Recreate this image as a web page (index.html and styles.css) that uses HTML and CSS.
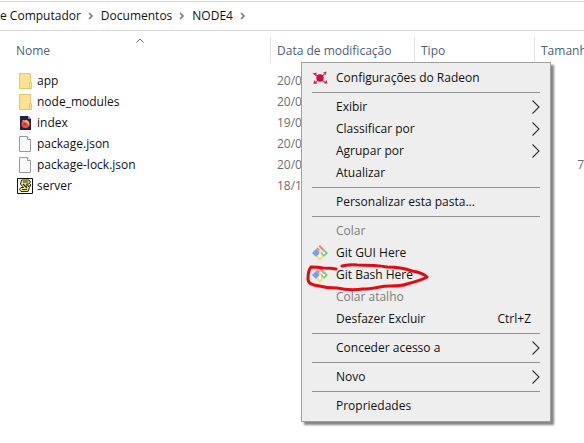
FILE: index.html
```html
<!DOCTYPE html>
<html lang="pt-BR">
<head>
<meta charset="utf-8">
<title>NODE4</title>
<link rel="stylesheet" href="styles.css">
</head>
<body>
<svg class="defs" aria-hidden="true">
  <symbol id="chevron" viewBox="0 0 8 14"><path d="M.5 .5L7 7L.5 13.500" fill="none" stroke="#333" stroke-width="1.100"/></symbol>
  <symbol id="crumb" viewBox="0 0 6 8"><path d="M1 1L4 4L1 7" fill="none" stroke="#777" stroke-width="1.600"/></symbol>
  <symbol id="folder" viewBox="0 0 16 16"><path d="M2 0H14V9L15 10V15.500H2Z" fill="#fce28f"/><path d="M2.500 .5H13.500V9M2.500 .5V15.500H14.500V9.500H12.500V15" fill="none" stroke="#e8c66c"/></symbol>
  <symbol id="file" viewBox="0 0 16 16"><path d="M2.500 .5H10.500L13.500 3.500V15.500H2.500Z" fill="#f8f8f8" stroke="#999"/><path d="M10.500 .5V3.500H13.500" fill="#fff" stroke="#999"/></symbol>
  <symbol id="firefox" viewBox="0 0 16 16"><path d="M3 1H11L14 4V15H3Z" fill="#25214f"/><path d="M11 1V4H14Z" fill="#8c85c4"/><circle cx="8.500" cy="9" r="4" fill="#f0522f"/><path d="M5 6C7 4 8 7 9 5C12 6 13 9 12 11C11 8 9 7 5 6Z" fill="#ffc33b"/><circle cx="8" cy="9.300" r="1.700" fill="#a83a9c"/></symbol>
  <symbol id="script" viewBox="0 0 16 16"><path d="M.5 .5H15.500V15.500H.5Z" fill="#fff" stroke="#111"/><path d="M4.500 2H12L13.500 4L12 6H9.500L12.500 9.500L11 13.500H4L2.500 11.500L4 9.500H6.500L3.500 6Z" fill="#f0ea68" stroke="#222"/><path d="M6 4H11M6 6L10 10M5 11.500H10M8 8H10M13.500 6V8H11" fill="none" stroke="#222" stroke-width="1.100"/></symbol>
  <symbol id="radeon" viewBox="0 0 16 14"><path d="M3 3L13 11.500M12.500 3L4 11" stroke="#d83d5b" stroke-width="1.100"/><path d="M.5 2.500L4.500 1.500L4 5ZM11 1.500L14.500 .5L14 4ZM2 9L5.500 12.500L1.500 13ZM12 12.500L14.500 9L15.500 12.500Z" fill="#cf2447"/><circle cx="8" cy="7" r="3.700" fill="#d9083a"/></symbol>
  <symbol id="git" viewBox="0 0 16 16"><path d="M8 0L12 4L8 8L4 4Z" fill="#ee8580"/><path d="M4 4L8 8L4 12L0 8Z" fill="#6ea3ef"/><path d="M12 4L16 8L12 12L8 8Z" fill="#86cb70"/><path d="M8 8L12 12L8 16L4 12Z" fill="#f4df82"/><path d="M6 2L10 6M8 5V11M9 6L12 8" stroke="#f5f5f5" stroke-width="1.300"/><circle cx="8" cy="11.500" r="1.200" fill="#fff"/><circle cx="12" cy="8" r="1.200" fill="#fff"/></symbol>
</svg>

<nav class="address" aria-label="Caminho">
  <a href="#">e Computador</a><svg class="crumb"><use href="#crumb"/></svg>
  <a href="#">Documentos</a><svg class="crumb"><use href="#crumb"/></svg>
  <a href="#">NODE4</a><svg class="crumb"><use href="#crumb"/></svg>
</nav>

<main>
  <table class="files">
    <colgroup><col class="col-name"><col class="col-date"><col class="col-type"><col></colgroup>
    <thead>
      <tr>
        <th><svg class="sort" viewBox="0 0 8 5"><path d="M.5 4.500L4 1L7.500 4.500" fill="none" stroke="#666"/></svg><span>Nome</span></th>
        <th><span>Data de modificação</span></th>
        <th><span>Tipo</span></th>
        <th><span>Tamanho</span></th>
      </tr>
    </thead>
    <tbody>
      <tr><td><a href="#"><svg><use href="#folder"/></svg>app</a></td><td>20/04</td><td></td><td></td></tr>
      <tr><td><a href="#"><svg><use href="#folder"/></svg>node_modules</a></td><td>20/04</td><td></td><td></td></tr>
      <tr><td><a href="#"><svg><use href="#firefox"/></svg>index</a></td><td>19/04</td><td></td><td></td></tr>
      <tr><td><a href="#"><svg><use href="#file"/></svg>package.json</a></td><td>20/0</td><td></td><td></td></tr>
      <tr><td><a href="#"><svg><use href="#file"/></svg>package-lock.json</a></td><td>20/0</td><td></td><td class="size">7</td></tr>
      <tr><td><a href="#"><svg><use href="#script"/></svg>server</a></td><td>18/1</td><td></td><td></td></tr>
    </tbody>
  </table>
</main>

<div class="menu">
  <button><svg class="icon"><use href="#radeon"/></svg><span>Configurações do Radeon</span></button>
  <hr>
  <button><span>Exibir</span><svg class="chevron"><use href="#chevron"/></svg></button>
  <button><span>Classificar por</span><svg class="chevron"><use href="#chevron"/></svg></button>
  <button><span>Agrupar por</span><svg class="chevron"><use href="#chevron"/></svg></button>
  <button><span>Atualizar</span></button>
  <hr>
  <button><span>Personalizar esta pasta...</span></button>
  <hr>
  <button disabled><span>Colar</span></button>
  <button><svg class="icon"><use href="#git"/></svg><span>Git GUI Here</span></button>
  <button><svg class="icon"><use href="#git"/></svg><span>Git Bash Here</span></button>
  <button disabled><span>Colar atalho</span></button>
  <button><span>Desfazer Excluir</span><kbd>Ctrl+Z</kbd></button>
  <hr>
  <button><span>Conceder acesso a</span><svg class="chevron"><use href="#chevron"/></svg></button>
  <hr>
  <button><span>Novo</span><svg class="chevron"><use href="#chevron"/></svg></button>
  <hr>
  <button><span>Propriedades</span></button>
  <svg class="marker" viewBox="0 0 126 32" aria-hidden="true"><path d="M30 6C25 5 21 5 17 5C12 4 8 4 5 4C2 7 2 11 2 16C2 19 4 21 8 22C16 24 24 25 31 25C40 27 49 27 57 26C67 26 75 23 84 23C91 23 96 23 101 21C109 19 116 17 121 14C118 11 112 9 106 8C98 5 91 4 81 4C70 2 61 2 51 2C46 1 41 2 36 3"/></svg>
</div>
</body>
</html>
```

FILE: styles.css
```css
* { box-sizing: border-box; }

body {
  margin: 0;
  min-height: 100vh;
  overflow: hidden;
  background: #fff;
  color: #111;
  font: 12px/16px "Open Sans", "Noto Sans", sans-serif;
}

a { color: inherit; text-decoration: none; }
.defs { display: none; }

.address {
  display: flex;
  align-items: center;
  height: 30px;
  margin-top: 1px;
  border: solid #d9d9d9;
  border-width: 1px 0;
}

.crumb { width: 6px; height: 8px; margin: 0 7px; }

.files {
  width: 100%;
  table-layout: fixed;
  border-collapse: collapse;
}

.col-name { width: 271px; }
.col-date { width: 144px; }
.col-type { width: 120px; }

th {
  position: relative;
  height: 39px;
  padding: 7px 0;
  color: #4c607a;
  font-weight: 400;
  text-align: left;
  white-space: nowrap;
}

th span {
  display: block;
  height: 25px;
  padding-left: 6px;
  border-right: 1px solid #e2e2e2;
  line-height: 26px;
}

th:first-child span { padding-left: 16px; }
th:last-child span { border: 0; overflow: hidden; }

.sort {
  position: absolute;
  top: 7px;
  left: 50%;
  width: 8px;
  height: 5px;
}

td {
  height: 21px;
  padding: 0 6px;
  color: #6d6d6d;
  white-space: nowrap;
}

td:first-child { padding-left: 17px; color: #111; }
td.size { padding: 0; text-align: right; }

td a { display: flex; align-items: center; gap: 4px; }
td svg { width: 16px; height: 16px; }

.menu {
  position: absolute;
  top: 62px;
  left: 301px;
  width: 250px;
  padding: 4px 10px;
  border: 1px solid #a0a0a0;
  background: #eee;
  box-shadow: 3px 3px 2px #858585;
}

.menu button {
  display: flex;
  align-items: center;
  width: 100%;
  height: 22px;
  padding: 0 0 0 24px;
  border: 0;
  background: none;
  color: #111;
  font: inherit;
  text-align: left;
}

.menu button:disabled { color: #7d7d7d; }
.menu hr { height: 1px; margin: 3px 0; border: 0; background: #919191; }

.icon { width: 16px; height: 16px; margin: 0 8px 0 -24px; }
.chevron { width: 8px; height: 14px; margin-left: auto; }
kbd { margin: 0 9px 0 auto; font: inherit; }

.marker {
  position: absolute;
  top: 200px;
  left: 4px;
  width: 126px;
  height: 32px;
  fill: none;
  stroke: #e50914;
  stroke-width: 3;
  stroke-linecap: round;
  stroke-linejoin: round;
  pointer-events: none;
}
```
